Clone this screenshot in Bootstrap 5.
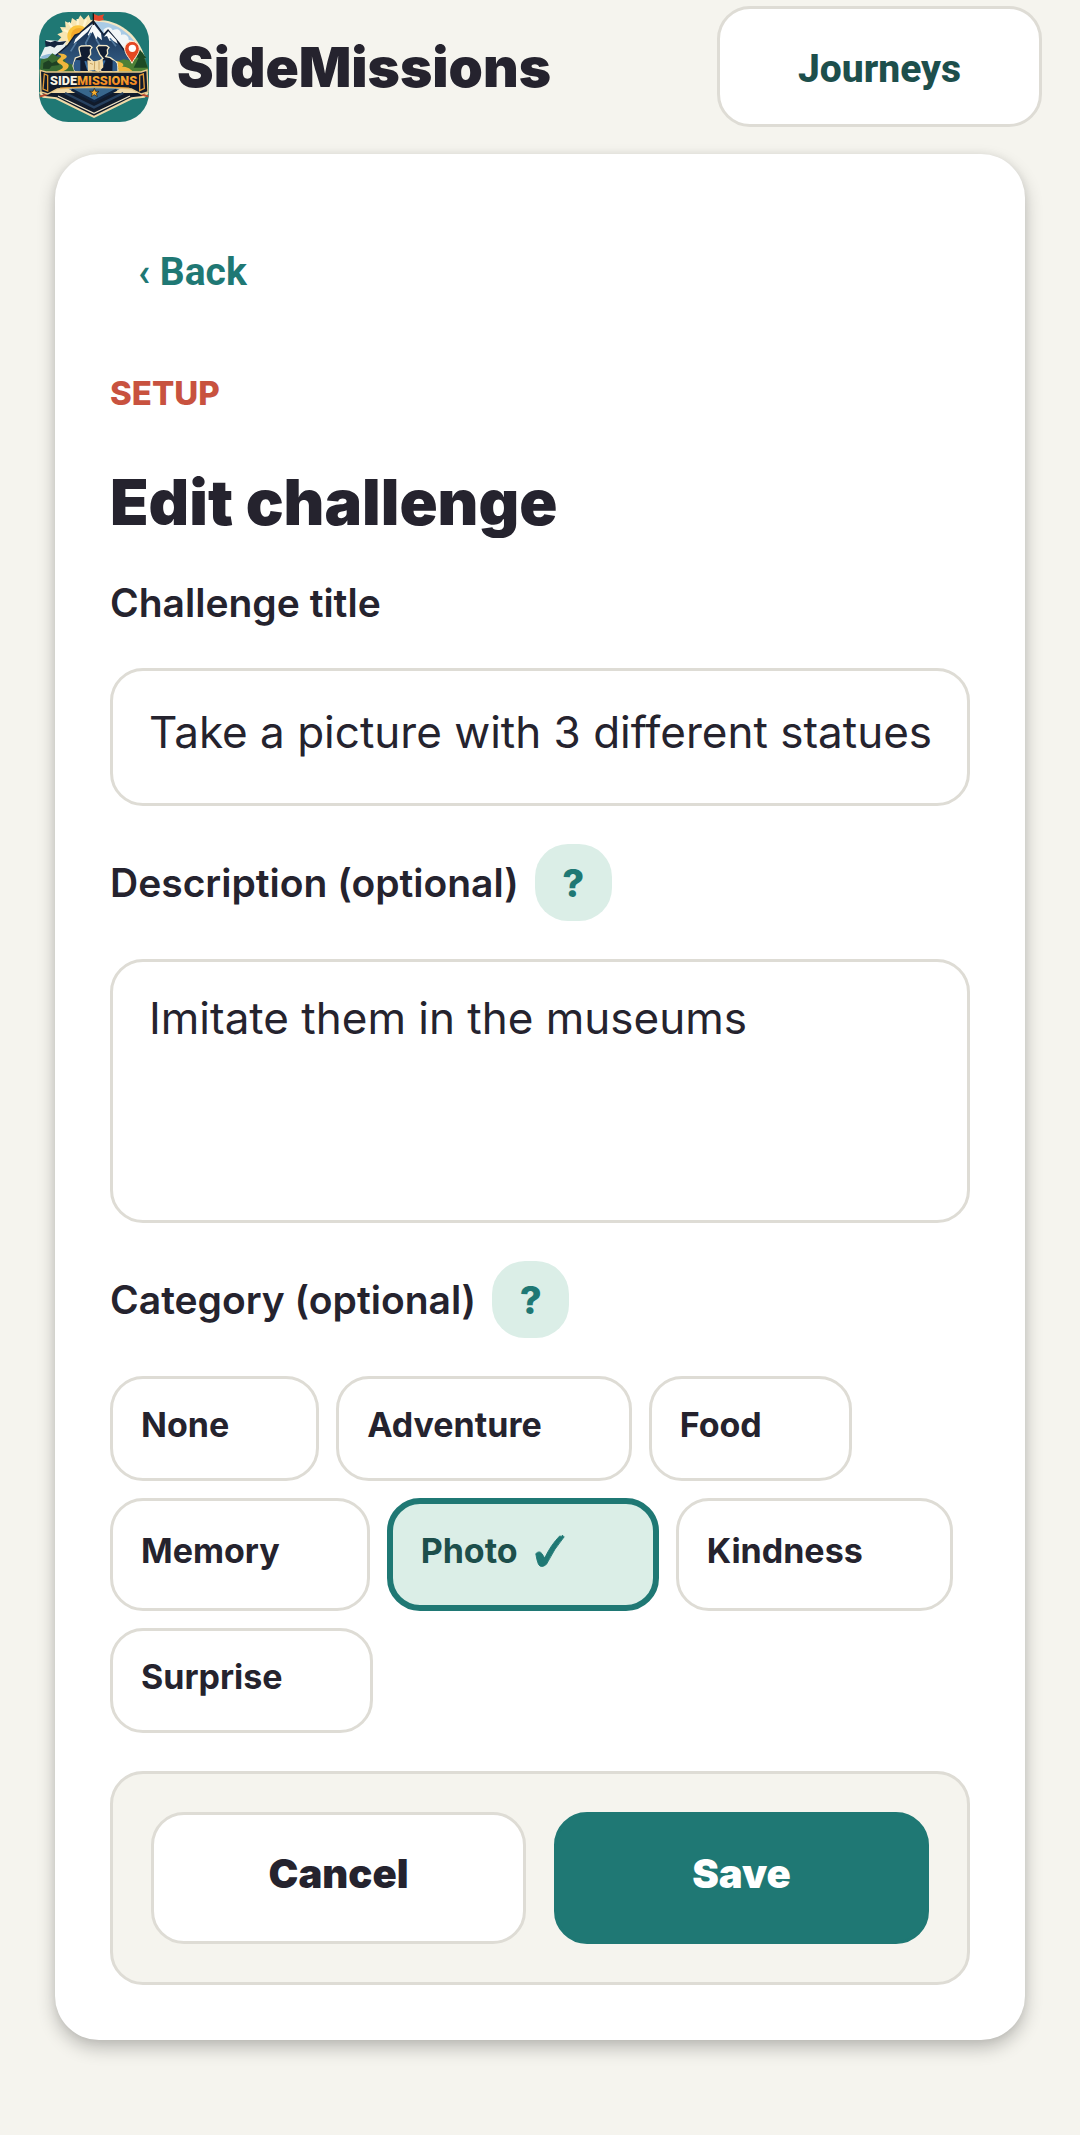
<!DOCTYPE html>
<html lang="en">

<head>
    <meta charset="UTF-8" />
    <meta name="viewport" content="width=device-width, initial-scale=1" />
    <title>SideMissions - Edit challenge</title>
    <link rel="stylesheet" href="https://cdn.jsdelivr.net/npm/bootstrap@5.3.3/dist/css/bootstrap.min.css" />
    <style>
        :root {
            --teal: #1f7874;
            --teal-dark: #1d4f4c;
            --mint: #dbeee7;
            --ink: #25232e;
            --line: #dedcd5;
            --paper: #f5f4ee;
        }

        body {
            background: var(--paper);
            color: var(--ink);
            font-family: Inter, "Open Sans", sans-serif;
        }

        .topbar {
            padding: 6px 38px 0 39px;
        }

        .brand-link {
            gap: 28px;
        }

        .brand-logo {
            width: 110px;
            height: 110px;
        }

        .brand-name {
            color: var(--ink);
            font-size: 55px;
            font-weight: 900;
            line-height: 72px;
        }

        .box-btn {
            --bs-btn-bg: #fff;
            --bs-btn-border-color: var(--line);
            --bs-btn-color: var(--ink);
            --bs-btn-border-width: 3px;
            --bs-btn-border-radius: 33px;
            --bs-btn-hover-bg: #fff;
            --bs-btn-hover-border-color: var(--teal);
            --bs-btn-font-size: 39px;
            --bs-btn-font-weight: 900;
        }

        .journeys-btn {
            --bs-btn-color: var(--teal-dark);
            --bs-btn-font-weight: 800;
            padding: 12px 78px 6px;
            font-family: Roboto, sans-serif;
            min-height: 121px;
        }

        .panel {
            margin: 27px 55px 95px;
            padding: 55px;
            gap: 38px;
            border-radius: 44px;
            box-shadow: 0 8px 18px rgba(0, 0, 0, .24), 0 0 8px rgba(0, 0, 0, .06);
        }

        .back-link {
            min-height: 121px;
            padding: 6px 28px 0;
            color: var(--teal);
            font-family: Roboto, sans-serif;
            font-size: 39px;
            font-weight: 700;
        }

        .eyebrow {
            color: #c8523f;
            font-size: 33px;
            font-weight: 800;
            line-height: 50px;
        }

        .page-title {
            padding-top: 10px;
            font-size: 63px;
            font-weight: 900;
            line-height: 72px;
            overflow: hidden;
        }

        .field-label {
            font-size: 39px;
            font-weight: 600;
            line-height: 54px;
        }

        .field-box {
            padding: 26px 36px;
            border: 3px solid var(--line);
            border-radius: 33px;
            color: var(--ink);
            font-size: 44px;
            line-height: 60px;
            resize: none;
        }

        input.field-box {
            padding-bottom: 36px;
            height: 138px;
        }

        textarea.field-box {
            height: 264px;
        }

        .help-btn {
            width: 77px;
            height: 77px;
            padding: 2px 0 0;
            border: 0;
            border-radius: 33px;
            background: var(--mint);
            color: var(--teal);
            font-size: 38px;
            font-weight: 800;
        }

        .chips {
            gap: 17px;
        }

        .chip {
            --bs-btn-font-size: 34px;
            --bs-btn-font-weight: 700;
            --bs-btn-line-height: 48px;
            padding: 22px 87px 29px 28px;
            min-height: 105px;
        }

        .chip.chosen {
            --bs-btn-bg: var(--mint);
            --bs-btn-color: var(--teal-dark);
            --bs-btn-border-color: var(--teal);
            --bs-btn-border-width: 6px;
            min-height: 113px;
        }

        .chip svg {
            width: 32px;
            height: 32px;
        }

        .actions {
            padding: 38px;
            gap: 28px;
            border: 3px solid var(--line);
            border-radius: 33px;
            background: var(--paper);
        }

        .actions .btn {
            --bs-btn-font-size: 40px;
            height: 132px;
            padding-bottom: 14px;
        }

        .save-btn {
            --bs-btn-bg: var(--teal);
            --bs-btn-border-color: var(--teal);
            --bs-btn-color: #fff;
            --bs-btn-hover-bg: var(--teal-dark);
            --bs-btn-hover-color: #fff;
        }
    </style>
</head>

<body>
    <!-- Top bar -->
    <header class="topbar d-flex justify-content-between align-items-center">
        <a href="#" class="brand-link d-flex align-items-center text-decoration-none">
            <svg class="brand-logo" viewBox="27 36 330 330" aria-hidden="true">
                <defs>
                    <clipPath id="tile">
                        <rect x="27" y="36" width="330" height="330" rx="88" />
                    </clipPath>
                    <linearGradient id="night" x1="0" y1="0" x2="0" y2="1">
                        <stop offset="0" stop-color="#14294a" />
                        <stop offset="1" stop-color="#36628a" />
                    </linearGradient>
                    <linearGradient id="fire" x1="0" y1="0" x2="0" y2="1">
                        <stop offset="0" stop-color="#ffc545" />
                        <stop offset="1" stop-color="#ee7314" />
                    </linearGradient>
                </defs>
                <g clip-path="url(#tile)">
                    <rect x="27" y="36" width="330" height="330" fill="#1f7874" />
                    <!-- sun -->
                    <path d="M84 122l10-10-12-9 16-7-8-15 17 1-2-18 17 7 4-17 15 10 10-18 11 13 14-15 6 17 16-4v70l-50 34z" fill="#f7e5b2" />
                    <path d="M101 90l22 9M116 67l14 20M143 57v24M168 58l-7 22" stroke="#fff5cf" stroke-width="7" />
                    <circle cx="144" cy="108" r="32" fill="#fbc53d" />
                    <circle cx="147" cy="108" r="24" fill="#f3a92b" />
                    <!-- sky -->
                    <path d="M193 60c68-4 128 35 153 115l-60 30-90-40z" fill="#f3e7c4" />
                    <path d="M195 65c64-2 118 37 144 109l-60 25-84-40z" fill="#a9cbe6" />
                    <path d="M220 90c10-12 23-11 28 1 15-9 27 1 25 14 14-5 24 4 23 15 16 0 24 12 28 25l-24 22-66-20z" fill="#f2f6f7" />
                    <path d="M29 175l15-33 13-4-10-18 59 4 1 22 25 4-30 30z" fill="#e9f0f0" />
                    <path d="M45 122l17 5 13-5 12 4 22-3-10 11-18 2-8 7-12-5-14 2z" fill="#14253e" />
                    <path d="M30 172c18-12 39-14 60-6l-18 18z" fill="#8fb8d8" />
                    <!-- mountains -->
                    <path d="M65 177l48-41 22-31 14-5 41-38 31 42 13-14 33 39 39 54-60 32H110z" fill="url(#night)" stroke="#0f1c33" stroke-width="4" />
                    <path d="M190 70l-17 25-22 20-20 17 5-15 19-20zM190 70l23 30 3 21-14-12-2 13-12-27-10 13-5-3z" fill="#f8fafa" />
                    <path d="M235 94l24 26 4 11-16-10-8 2-8-15-9 2z" fill="#f8fafa" />
                    <path d="M183 99l-16 30 4 14-17 20M198 117l15 25M240 115l18 24M139 127l-17 27" stroke="#52799e" stroke-width="5" fill="none" />
                    <path d="M190 75V40" stroke="#191919" stroke-width="4" />
                    <path d="M192 42l13 5 18-4-5 9 4 7-15 4-15-3z" fill="#e4482d" />
                    <!-- hills and paths -->
                    <path d="M30 205l3-26 20-5 14-14 17 11 14-2 11 19 25 8v25H32z" fill="#386b33" />
                    <path d="M40 189l16-8 10 8 14-6 8 12-23 3-7 9-19-1z" fill="#1d4023" />
                    <path d="M246 216l12-30 23-8 22 4 20-10 15-15 16 47v16z" fill="#4d8136" />
                    <path d="M329 148l-11 25h8l-15 30h42l-10-29h6z" fill="#1d4a25" />
                    <path d="M83 161c20-3 39 8 19 17-15 8 22 9 13 24-4 8-13 12-24 13l-12-1c24-8 26-15 6-25-12-9 12-15 8-22z" fill="#efb53c" />
                    <path d="M257 183c23 4 28 13 19 17 16 0 23 5 32 14h-49c13-9 4-15-9-17z" fill="#efb53c" />
                    <!-- hikers with the map -->
                    <g fill="#101c31" stroke="#f3e8c7" stroke-width="4">
                        <path d="M148 141l6-3 26-1 6 5-5 7 1 14-7 9 13 12 8 19-13 12h-48l-6-17 7-24 16-6-3-12-2-9z" />
                        <path d="M200 143l6-7 24 1 7 5-5 8 1 11-6 9 14 3 20 15 3 27h-49l-14-12 5-17 13-11-10-12z" />
                    </g>
                    <path d="M137 179c-7 8-9 26-2 34l16 2V181zM248 181c15 3 15 22 13 32l-14 2z" fill="#2f5a88" />
                    <path d="M166 183l8 25 15 2M224 181l-12 25-12 4" fill="none" stroke="#386da0" stroke-width="6" />
                    <path d="M172 181l22 3 24-6 2 24-15 15-13-8-18 5z" fill="#f2dca9" />
                    <path d="M194 184l-1 25M207 184v25M180 190l9 3" stroke="#caa563" stroke-width="3" />
                    <!-- map pin -->
                    <path d="M306 190c-8-17-22-28-22-44a22 22 0 0 1 44 0c0 16-15 27-22 44z" fill="#e54823" stroke="#fff0d8" stroke-width="3" />
                    <circle cx="307" cy="145" r="11" fill="#fff" />
                    <!-- shield -->
                    <path d="M27 278l23-14h282l24 16-12 13-36 4-116 57-116-57-38-4z" fill="#f0d9a7" />
                    <path d="M36 279h310l-9 9-33 4-112 55-112-55-35-4z" fill="#111b2b" />
                    <path d="M84 288l108 52 108-52" fill="none" stroke="#eee1c2" stroke-width="4" />
                    <path d="M112 265h161l-80 41z" fill="#38678d" />
                    <path d="M125 269l68 35 67-35" fill="none" stroke="#10243f" stroke-width="8" />
                    <path d="M105 279l87 43 88-43" fill="none" stroke="#27415f" stroke-width="7" />
                    <path d="M29 290l22-7M332 282l24 8" stroke="#b94a2e" stroke-width="6" />
                    <!-- ribbon -->
                    <path d="M31 211l17 5h285l18-6 3 66-20 6-30-15q-110-11-222 0l-29 15-20-6z" fill="#111b2b" stroke="#e9ca8a" stroke-width="4" />
                    <path d="M43 222l-4 45 14 6V226zM340 222l3 43-14 7V226z" fill="none" stroke="#e29b37" stroke-width="4" />
                    <text x="60" y="254" font-family="Roboto, sans-serif" font-weight="900" font-size="38" fill="#f9f4e3">SIDE<tspan fill="url(#fire)">MISSIONS</tspan></text>
                    <path d="M90 264q103-9 208 0" fill="none" stroke="#e69b35" stroke-width="3" />
                    <path d="M193 265l4 9h10l-8 6 3 10-9-6-9 6 3-10-8-6h10z" fill="#f8ae2d" stroke="#111b2b" stroke-width="2" />
                </g>
            </svg>
            <span class="brand-name">SideMissions</span>
        </a>
        <button type="button" class="btn box-btn journeys-btn">Journeys</button>
    </header>

    <!-- Challenge form -->
    <main>
        <form class="panel bg-white d-flex flex-column">
            <a href="#" class="back-link d-inline-flex align-items-center align-self-start text-decoration-none">‹ Back</a>
            <div class="eyebrow">SETUP</div>
            <h1 class="page-title m-0">Edit challenge</h1>

            <label for="challenge-title" class="field-label">Challenge title</label>
            <input type="text" id="challenge-title" class="form-control field-box" value="Take a picture with 3 different statues" />

            <div class="d-flex align-items-center gap-3">
                <label for="description" class="field-label">Description (optional)</label>
                <button type="button" class="btn help-btn" aria-label="Help with the description">?</button>
            </div>
            <textarea id="description" class="form-control field-box">Imitate them in the museums</textarea>

            <div class="d-flex align-items-center gap-3">
                <span id="category-label" class="field-label">Category (optional)</span>
                <button type="button" class="btn help-btn" aria-label="Help with the category">?</button>
            </div>
            <div class="chips d-flex flex-wrap" role="group" aria-labelledby="category-label">
                <button type="button" class="btn box-btn chip">None</button>
                <button type="button" class="btn box-btn chip">Adventure</button>
                <button type="button" class="btn box-btn chip">Food</button>
                <button type="button" class="btn box-btn chip">Memory</button>
                <button type="button" class="btn box-btn chip chosen d-flex align-items-center gap-3" aria-pressed="true">Photo
                    <svg viewBox="0 0 32 36" aria-hidden="true">
                        <path d="M0 21q4-4 7 0l3 5Q17 11 27 1l2 1 1-2 1 2h1Q21 15 12 33q-6 5-9 0Q1 28 0 21z" fill="#1f7874" stroke="#1f7874" />
                    </svg>
                </button>
                <button type="button" class="btn box-btn chip">Kindness</button>
                <button type="button" class="btn box-btn chip">Surprise</button>
            </div>

            <div class="actions d-flex">
                <button type="button" class="btn box-btn flex-fill w-50">Cancel</button>
                <button type="submit" class="btn box-btn save-btn flex-fill w-50">Save</button>
            </div>
        </form>
    </main>

    <script src="https://cdn.jsdelivr.net/npm/bootstrap@5.3.3/dist/js/bootstrap.bundle.min.js"></script>
</body>

</html>
